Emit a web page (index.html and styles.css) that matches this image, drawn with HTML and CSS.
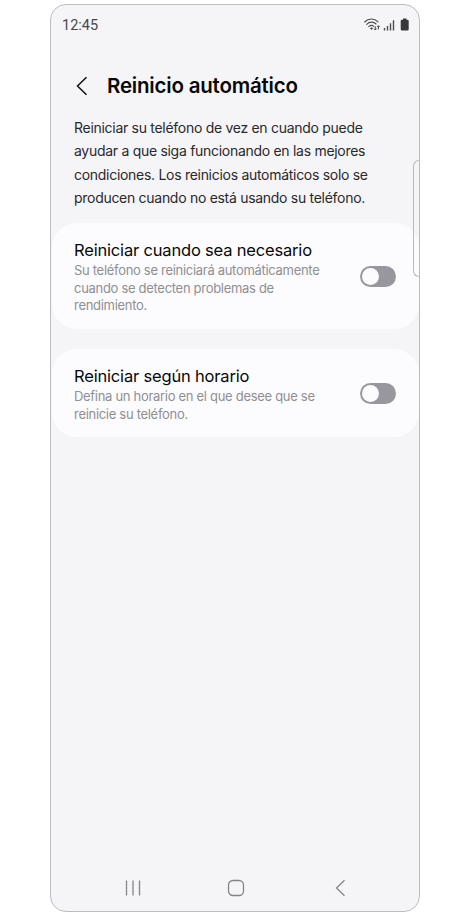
FILE: index.html
```html
<!DOCTYPE html>
<html lang="es">
<head>
  <meta charset="UTF-8">
  <meta name="viewport" content="width=device-width, initial-scale=1.0">
  <title>Reinicio automático</title>
  <link rel="stylesheet" href="styles.css">
</head>
<body>
  <div class="phone">
    <div class="status">
      <span class="time">12:45</span>
      <svg class="status-icons" width="46" height="16" viewBox="0 0 46 16">
        <g fill="none" stroke="#4c4c4e" stroke-width="1.1" stroke-linecap="round">
          <path d="M.7 5C4.400 1.100 10.400 1.100 14 4.800"/>
          <path d="M2.700 7.300C5.500 4.500 9.500 4.500 12.100 7"/>
          <path d="M4.800 9.600C6.400 8.200 8.400 8.200 9.800 9.400"/>
        </g>
        <path d="M6 11.300L7.500 10.300L9 11.300L7.500 12.900Z" fill="#4c4c4e"/>
        <path d="M11.300 9.300v3.600M10 11.600l1.300 1.400 1.300-1.400M14.400 12.400V8.800M13.100 10.100l1.300-1.400 1.300 1.400" fill="none" stroke="#4c4c4e"/>
        <path d="M20.500 11v2.500M23.500 9v4.500M26.500 6.300v7.200M29.500 3.300v10.200" fill="none" stroke="#4c4c4e" stroke-width="1.4"/>
        <path d="M39 1.500h3.400v1.300h1q1.300 0 1.300 1.300v8.100q0 1.300-1.300 1.300H38q-1.300 0-1.300-1.300V4.100q0-1.300 1.300-1.300h1z" fill="#38383a"/>
      </svg>
    </div>
    <div class="header">
      <svg width="12" height="20" viewBox="0 0 12 20">
        <path d="M10.500 1.300L1.500 10l9 8.700" fill="none" stroke="#111" stroke-width="1.5"/>
      </svg>
      <h1>Reinicio automático</h1>
    </div>
    <p class="intro">Reiniciar su teléfono de vez en cuando puede<br>ayudar a que siga funcionando en las mejores<br>condiciones. Los reinicios automáticos solo se<br>producen cuando no está usando su teléfono.</p>
    <div class="card">
      <div class="text">
        <h2>Reiniciar cuando sea necesario</h2>
        <p>Su teléfono se reiniciará automáticamente<br>cuando se detecten problemas de<br>rendimiento.</p>
      </div>
      <span class="switch"></span>
    </div>
    <div class="card">
      <div class="text">
        <h2>Reiniciar según horario</h2>
        <p>Defina un horario en el que desee que se<br>reinicie su teléfono.</p>
      </div>
      <span class="switch"></span>
    </div>
    <div class="nav">
      <svg width="16" height="18" viewBox="0 0 16 18">
        <path d="M1.500 1.500v15M8 1.500v15M14.500 1.500v15" stroke="#858587" stroke-width="1.3"/>
      </svg>
      <svg width="18" height="18" viewBox="0 0 18 18">
        <rect x="1.500" y="1.500" width="15" height="15" rx="4.500" fill="none" stroke="#858587" stroke-width="1.3"/>
      </svg>
      <svg width="16" height="18" viewBox="0 0 16 18">
        <path d="M13.500 1.200L5.500 9l8 7.800" fill="none" stroke="#858587" stroke-width="1.3"/>
      </svg>
    </div>
    <div class="edge"></div>
  </div>
</body>
</html>
```

FILE: styles.css
```css
*{
  margin: 0;
  padding: 0;
  box-sizing: border-box;
}
body{
  background-color: #ffffff;
  font-family: Inter, "Liberation Sans", sans-serif;
}
.phone{
  width: 370px;
  height: 908px;
  margin: 4px 0 0 50px;
  border: 1px solid #bdbdbf;
  border-radius: 16px;
  background-color: #f5f5f8;
  position: relative;
  overflow: hidden;
  display: flex;
  flex-direction: column;
}
.status{
  height: 40px;
  padding: 0 9px 0 11px;
  display: flex;
  align-items: center;
  justify-content: space-between;
}
.time{
  font-family: Roboto, sans-serif;
  font-size: 14.5px;
  color: #48484a;
}
.header{
  height: 48px;
  margin-top: 17px;
  padding-left: 25px;
  display: flex;
  align-items: center;
  gap: 19px;
}
h1{
  font-size: 20.5px;
  font-weight: 600;
  line-height: 28px;
  letter-spacing: -0.2px;
  color: #080808;
  white-space: nowrap;
}
.intro{
  margin-top: 6px;
  padding-left: 23px;
  font-size: 14px;
  line-height: 23.3px;
  letter-spacing: -0.29px;
  color: #29292b;
  white-space: nowrap;
}
.card{
  height: 106px;
  margin: 14px 0 0 1px;
  padding: 0 23px 0 22px;
  border-radius: 25px;
  background-color: #fcfcff;
  display: flex;
  align-items: center;
  justify-content: space-between;
}
.card + .card{
  height: 88px;
  margin-top: 20px;
}
.text{
  padding-top: 3px;
}
h2{
  font-size: 16.5px;
  font-weight: 400;
  line-height: 20px;
  letter-spacing: -0.18px;
  margin-bottom: 2px;
  color: #080808;
  white-space: nowrap;
}
.card p{
  font-size: 13px;
  line-height: 17.6px;
  letter-spacing: -0.3px;
  color: #8f8f92;
  white-space: nowrap;
}
.switch{
  width: 36px;
  height: 21px;
  padding: 2px;
  border-radius: 11px;
  background-color: #98979d;
}
.switch::before{
  content: "";
  display: block;
  width: 17px;
  height: 17px;
  border-radius: 50%;
  background-color: #fcfcff;
}
.nav{
  margin-top: auto;
  height: 46px;
  padding: 0 72px 0 74px;
  display: flex;
  align-items: center;
  justify-content: space-between;
}
.edge{
  position: absolute;
  top: 155px;
  right: -1px;
  width: 7px;
  height: 117px;
  border: 1px solid #b9b9bc;
  border-right: none;
  border-radius: 6px 0 0 6px;
}
```
